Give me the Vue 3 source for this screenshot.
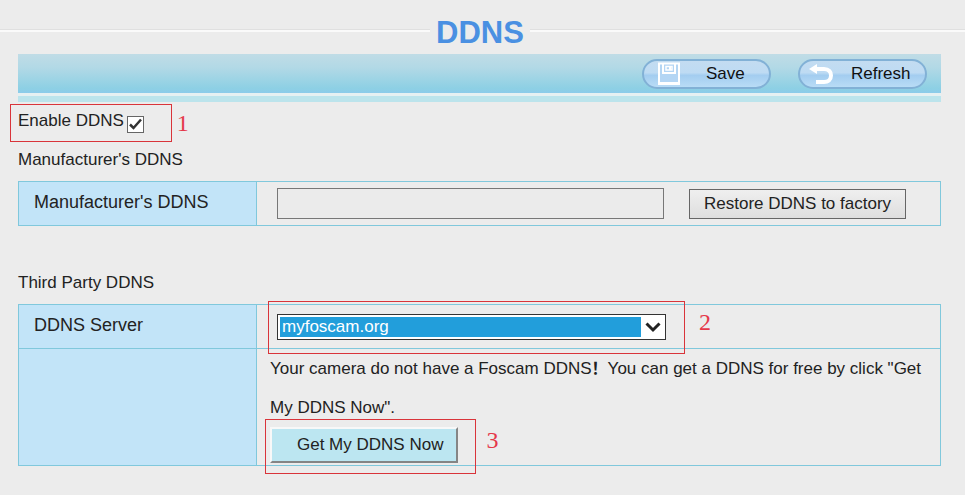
<script setup>
import { ref } from 'vue'

const enabled = ref(true)
const manufacturerDdns = ref('')
const servers = ['myfoscam.org']
const server = ref(servers[0])
</script>

<template>
  <main class="page">
    <header class="title-bar">
      <h1>DDNS</h1>
    </header>

    <form class="content" @submit.prevent>
      <div class="toolbar">
        <button type="button" class="pill">
          <svg class="save-icon" viewBox="0 0 24 24" aria-hidden="true">
            <path fill="#b4d6f4" d="M2 2H22V22H2Z" />
            <path fill="none" stroke="#fff" stroke-width="2" d="M2 1.500H22V22H2Z" />
            <path fill="none" stroke="#fff" stroke-width="2" d="M6 2V11H18V2" />
            <path fill="none" stroke="#fff" stroke-width="1.500" d="M9 4.500H15V8H9Z" />
            <path fill="#fff" d="M12 4H14V8H12Z" />
            <path fill="#fff" d="M2 20H22V23H2Z" />
          </svg>
          <span>Save</span>
        </button>
        <button type="button" class="pill pill-refresh">
          <svg class="refresh-icon" viewBox="0 0 26 24" aria-hidden="true">
            <path fill="#fff" d="M1 7L9 2V12Z" />
            <path fill="none" stroke="#fff" stroke-width="4" d="M6 7H16C21 7 23 10 23 13.500C23 18 20 20 16 20H8" />
          </svg>
          <span>Refresh</span>
        </button>
      </div>
      <div class="stripe"></div>

      <div class="enable">
        <label for="enable">Enable DDNS</label>
        <input id="enable" v-model="enabled" type="checkbox" />
        <svg v-if="enabled" class="tick" viewBox="0 0 17 17" aria-hidden="true">
          <path fill="none" stroke="#333" stroke-width="2.500" d="M3 8.500L6.500 12L14 3.500" />
        </svg>
        <span class="mark mark-enable"><b>1</b></span>
      </div>

      <h2>Manufacturer's DDNS</h2>
      <section class="grid">
        <div class="row">
          <label class="name" for="manufacturer">Manufacturer's DDNS</label>
          <div class="value">
            <input id="manufacturer" v-model="manufacturerDdns" class="host" type="text" readonly />
            <button type="button" class="restore">Restore DDNS to factory</button>
          </div>
        </div>
      </section>

      <h2 class="second">Third Party DDNS</h2>
      <section class="grid">
        <div class="row">
          <label class="name" for="server">DDNS Server</label>
          <div class="value">
            <div class="picker">
              <select id="server" v-model="server">
                <option v-for="s in servers" :key="s">{{ s }}</option>
              </select>
              <svg class="chevron" viewBox="0 0 16 12" aria-hidden="true">
                <path fill="none" stroke="#222" stroke-width="3" d="M1.500 2.500L8 9L14.500 2.500" />
              </svg>
              <span class="mark mark-server"><b>2</b></span>
            </div>
          </div>
        </div>
        <div class="row">
          <div class="name"></div>
          <div class="note">
            <p>Your camera do not have a Foscam DDNS<span class="bang">！</span>You can get a DDNS for free by click "Get My DDNS Now".</p>
            <div class="action">
              <button type="button" class="get">Get My DDNS Now</button>
              <span class="mark mark-get"><b>3</b></span>
            </div>
          </div>
        </div>
      </section>
    </form>
  </main>
</template>

<style>
html {
  background: #ececec;
}
</style>

<style scoped>
.page {
  padding: 16px 0 24px;
  color: #222;
  font: 17px/20px "Liberation Sans", Arial, sans-serif;
}
.page * {
  box-sizing: border-box;
}
button,
input,
select {
  margin: 0;
  color: inherit;
  font: inherit;
}
.title-bar {
  display: flex;
  gap: 6px;
  margin-bottom: 4px;
}
.title-bar::before,
.title-bar::after {
  content: "";
  flex: 1 1 0;
  height: 0;
  margin-top: 13px;
  border-top: 1px solid #e0e0e0;
  border-bottom: 2px solid #fafafa;
}
.title-bar::after {
  flex-basis: 5px;
}
h1 {
  margin: 0;
  color: #4a90e2;
  font-size: 31px;
  line-height: 34px;
}
.content {
  padding: 0 24px 0 18px;
}
.toolbar {
  display: flex;
  justify-content: flex-end;
  align-items: center;
  gap: 27px;
  height: 39px;
  padding-right: 14px;
  background: linear-gradient(#c0dce6, #b2d9e6 35%, #8dd0e4 88%, #8ccbea);
}
.pill {
  display: flex;
  align-items: center;
  width: 129px;
  height: 30px;
  padding: 0 13px;
  border: 2px solid #82b1d6;
  border-radius: 15px;
  background: linear-gradient(#c3dcf1, #bedbf3 45%, #a3cdf0 55%, #b9dcf6);
  color: #111;
}
.save-icon {
  width: 24px;
  height: 24px;
  margin-right: 25px;
}
.pill-refresh {
  padding-left: 8px;
}
.refresh-icon {
  width: 26px;
  height: 24px;
  margin-right: 17px;
}
.stripe {
  height: 9px;
  border-top: 3px solid #e6f0f2;
  background: #bce4ec;
}
.enable {
  position: relative;
  display: flex;
  gap: 3px;
  width: max-content;
  margin-top: 9px;
}
.enable input {
  width: 17px;
  height: 17px;
  margin-top: 5px;
  appearance: none;
  border: 1px solid #666;
  background: #fff;
}
.tick {
  position: absolute;
  right: 0;
  top: 5px;
  width: 17px;
  height: 17px;
  pointer-events: none;
}
.mark {
  position: absolute;
  border: 1px solid #d9343a;
  pointer-events: none;
}
.mark b {
  position: absolute;
  left: 100%;
  top: 50%;
  margin-left: 6px;
  transform: translateY(-50%);
  color: #e5394a;
  font: 24px/28px "Liberation Serif", "Times New Roman", serif;
}
.mark-enable {
  inset: -7px -28px -9px -8px;
}
.mark-server {
  inset: -13px -19px -14px -9px;
}
.mark-server b {
  top: 20px;
  margin-left: 15px;
}
.mark-get {
  inset: -8px -18px -11px -5px;
}
.mark-get b {
  top: 20px;
  margin-left: 11px;
}
h2 {
  margin: 17px 0 11px;
  font-size: 17px;
  font-weight: normal;
  line-height: 20px;
}
.second {
  margin-top: 47px;
}
.grid {
  border: 1px solid #80c8dc;
}
.row {
  display: grid;
  grid-template-columns: 238px 1fr;
  min-height: 43px;
}
.row + .row {
  border-top: 1px solid #80c8dc;
}
.name {
  display: flex;
  align-items: center;
  padding: 0 0 3px 15px;
  border-right: 1px solid #80c8dc;
  background: #c2e4f8;
  font-size: 18px;
}
.value {
  display: flex;
  align-items: center;
  gap: 25px;
  padding: 0 20px;
}
.host {
  flex: 0 1 387px;
  min-width: 0;
  height: 31px;
  border: 1px solid #777;
  background: #ebebeb;
}
.restore {
  height: 30px;
  padding: 0 14px;
  border: 1px solid #666;
  background: linear-gradient(#efefef, #dedede);
}
.picker {
  position: relative;
  flex: 0 1 389px;
}
select {
  display: block;
  width: 100%;
  height: 26px;
  padding: 0 26px 0 4px;
  appearance: none;
  border: 1px solid #333;
  border-radius: 0;
  background: linear-gradient(#229edb, #229edb) 2px 2px / calc(100% - 26px) calc(100% - 4px) no-repeat #fff;
  color: #fff;
}
.chevron {
  position: absolute;
  right: 5px;
  top: 7px;
  width: 16px;
  height: 12px;
  pointer-events: none;
}
.note {
  padding: 0 13px 2px;
}
.note p {
  margin: 0;
  line-height: 39px;
}
.bang {
  font-family: "Noto Sans CJK SC", sans-serif;
  font-size: 16px;
  font-weight: bold;
  line-height: 1;
}
.action {
  position: relative;
  width: max-content;
}
.get {
  display: block;
  height: 36px;
  padding: 0 13px 0 25px;
  border: 2px solid;
  border-color: #f8f8f8 #858585 #858585 #f8f8f8;
  background: #bce6f1;
}
</style>
